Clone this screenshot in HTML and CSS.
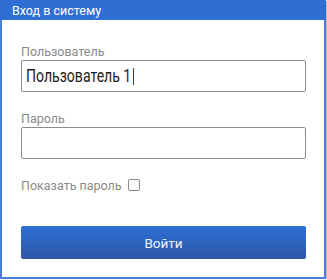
FILE: index.html
```html
<!DOCTYPE html>
<html>
<head>
<meta charset="utf-8">
<link rel="stylesheet" href="styles.css">
</head>
<body>
<div class="window">
  <div class="titlebar">Вход в систему</div>
  <div class="content">
    <div class="field">
      <label class="label">Пользователь</label>
      <div class="input"><span class="value">Пользователь 1<span class="caret"></span></span></div>
    </div>
    <div class="field">
      <label class="label">Пароль</label>
      <div class="input"></div>
    </div>
    <div class="show">
      <span>Показать пароль</span>
      <span class="checkbox"></span>
    </div>
    <button class="btn">Войти</button>
  </div>
</div>
</body>
</html>
```
FILE: styles.css
```css
html, body {
  margin: 0;
  padding: 0;
  background: #fff;
}
body {
  font-family: Roboto, "Liberation Sans", sans-serif;
}
.window {
  width: 322px;
  height: 277px;
  border: 2px solid #4b7fd6;
  border-top: none;
  box-shadow: 1px 1px 0 #b9b9b9;
  background: #fff;
  display: flex;
  flex-direction: column;
}
.titlebar {
  height: 20px;
  margin: 0 -2px;
  background: #2f6fd3;
  color: #fff;
  font-size: 12.5px;
  line-height: 21px;
  padding-left: 12px;
}
.content {
  padding: 25px 18px 0 19px;
  display: flex;
  flex-direction: column;
}
.field {
  display: flex;
  flex-direction: column;
  margin-bottom: 20px;
}
.field + .field {
  margin-bottom: 20px;
}
.label {
  color: #8a8a8a;
  font-size: 12.5px;
  line-height: 14px;
  margin-bottom: 1px;
}
.input {
  height: 30px;
  border: 1px solid #8c8c8c;
  border-radius: 2px;
  color: #222;
  padding-left: 4px;
  display: flex;
  align-items: center;
  overflow: hidden;
}
.value {
  display: inline-block;
  font-size: 18.5px;
  line-height: 22px;
  white-space: nowrap;
  transform: scaleX(0.76);
  transform-origin: left center;
}
.caret {
  display: inline-block;
  width: 1.5px;
  height: 17px;
  background: #000;
  margin-left: 2px;
  vertical-align: -3px;
}
.show {
  display: flex;
  align-items: center;
  gap: 6px;
  color: #8a8a8a;
  font-size: 12.5px;
  line-height: 14px;
}
.checkbox {
  width: 10px;
  height: 10px;
  border: 1px solid #8a8a8a;
  border-radius: 2px;
  margin-top: -2px;
}
.btn {
  margin-top: 33px;
  height: 33px;
  border: none;
  border-radius: 2px;
  background: linear-gradient(#2d6fd6, #3158a5);
  color: #f2f2f2;
  font-family: Roboto, "Liberation Sans", sans-serif;
  font-size: 13.5px;
  padding: 0;
}
```
